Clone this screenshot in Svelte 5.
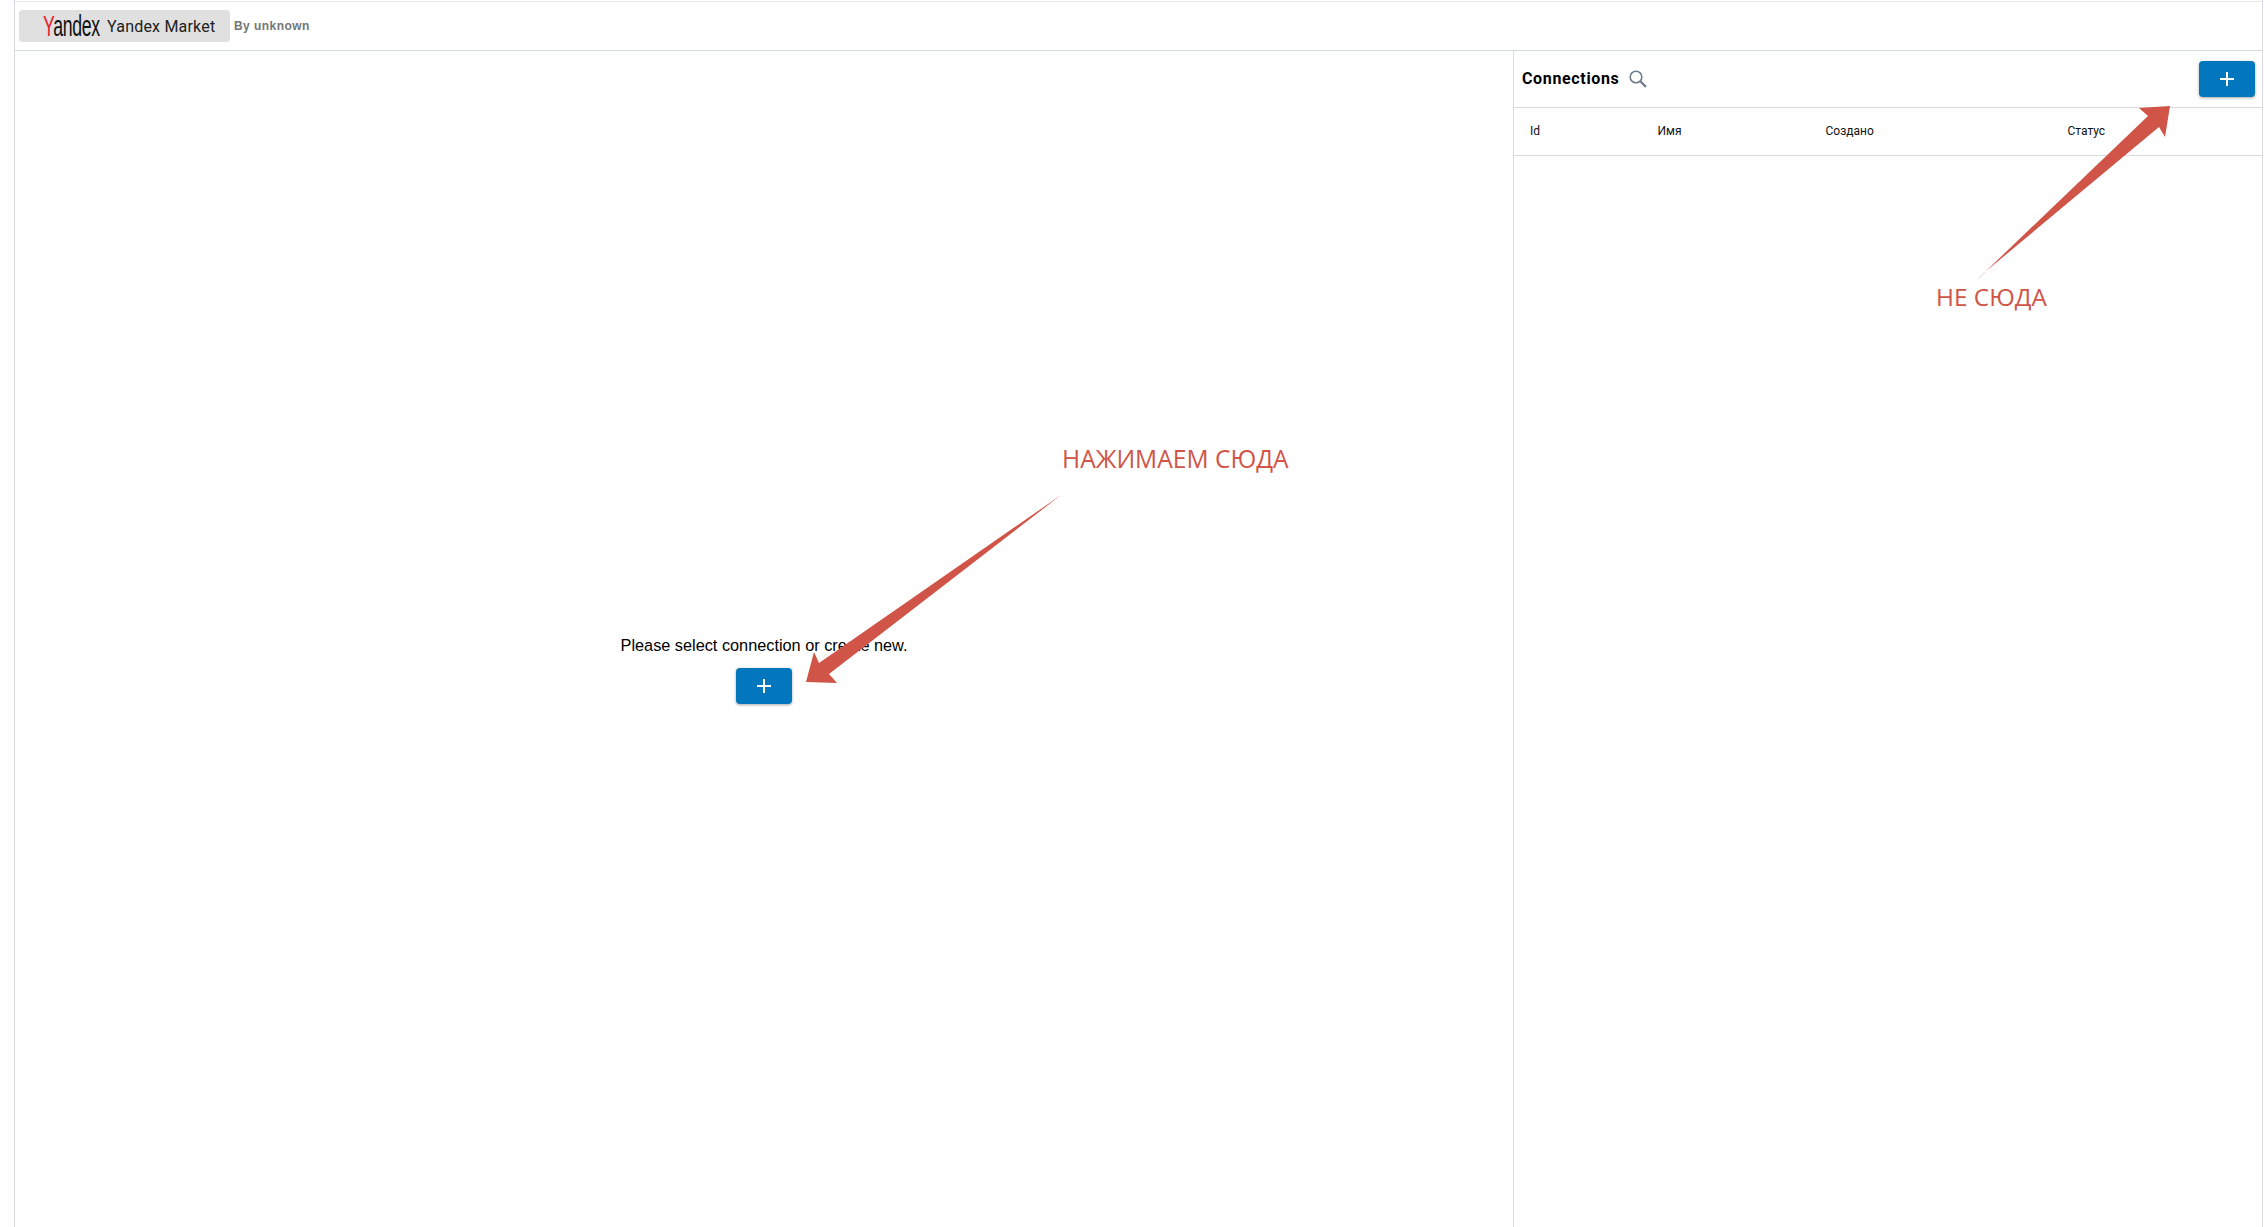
<script>
	const columns = ['Id', 'Имя', 'Создано', 'Статус'];
</script>

<div class="page">
	<header class="topbar">
		<div class="chip">
			<span class="logo"><span class="logo-text"><span class="y">Y</span>andex</span></span>
			<span class="chip-name">Yandex Market</span>
		</div>
		<span class="author">By unknown</span>
	</header>

	<div class="body">
		<main class="main">
			<p class="hint">Please select connection or create new.</p>
			<button class="add" aria-label="Add">
				<svg width="16" height="16" viewBox="0 0 16 16"><path d="M8 1v14M1 8h14" stroke="#fff" stroke-width="2" fill="none" /></svg>
			</button>
		</main>

		<aside class="side">
			<div class="side-head">
				<h2>Connections</h2>
				<svg class="search" width="20" height="20" viewBox="0 0 20 20" fill="none" stroke="#6f7c8c">
					<circle cx="8" cy="8" r="5.8" stroke-width="1.6" />
					<path d="M12.3 12.3l5.6 5.6" stroke-width="2.2" />
				</svg>
				<button class="add right" aria-label="Add">
					<svg width="16" height="16" viewBox="0 0 16 16"><path d="M8 1v14M1 8h14" stroke="#fff" stroke-width="2" fill="none" /></svg>
				</button>
			</div>
			<div class="table-head">
				{#each columns as col}
					<span>{col}</span>
				{/each}
			</div>
		</aside>
	</div>

	<!-- annotations drawn on top of the screenshot -->
	<svg class="arrows" width="2265" height="1227" viewBox="0 0 2265 1227">
		<polygon fill="#d05447" points="1061,495 829,674 837,683 806,682 814,652 819,663" />
		<polygon fill="#d05447" points="1985,272 2159,127 2165,137 2170,106 2139,108 2148,116" />
		<path d="M1985 272L1979 278" stroke="#d05447" stroke-width="1" opacity="0.25" />
	</svg>
	<span class="note note-yes">НАЖИМАЕМ СЮДА</span>
	<span class="note note-no">НЕ СЮДА</span>
</div>

<style>
	:global(body) {
		background: #fff;
		overflow: hidden;
	}

	.page {
		position: relative;
		height: 1227px;
		box-sizing: border-box;
		margin-left: 14px;
		margin-right: 2px;
		padding-top: 1px;
		display: flex;
		flex-direction: column;
		border-left: 1px solid #d9d9df;
		border-right: 1px solid #d9d9df;
		font-family: Roboto, sans-serif;
		color: #000;
	}

	.topbar {
		height: 50px;
		flex: none;
		box-sizing: border-box;
		display: flex;
		align-items: center;
		padding-left: 4px;
		border-top: 1px solid #e8e8ec;
		border-bottom: 1px solid #d5dae2;
	}

	.chip {
		width: 211px;
		height: 32px;
		box-sizing: border-box;
		display: flex;
		align-items: center;
		background: #e0e0e0;
		border-radius: 4px;
		padding-left: 24px;
	}

	.logo {
		width: 64px;
		flex: none;
	}

	.logo-text {
		display: inline-block;
		font-family: "Liberation Sans", sans-serif;
		font-size: 29px;
		line-height: 32px;
		color: #111;
		transform: scaleX(0.61);
		transform-origin: left center;
		letter-spacing: -0.5px;
	}

	.y {
		color: #e8232a;
	}

	.chip-name {
		font-size: 16px;
		letter-spacing: 0.2px;
		color: #212121;
		white-space: nowrap;
	}

	.author {
		margin-left: 4px;
		font-family: "Liberation Sans", sans-serif;
		font-size: 12px;
		font-weight: 700;
		letter-spacing: 0.45px;
		color: #757575;
	}

	.body {
		flex: 1;
		display: flex;
		min-height: 0;
	}

	.main {
		width: 1499px;
		flex: none;
		box-sizing: border-box;
		border-right: 1px solid #d9d9df;
		display: flex;
		flex-direction: column;
		align-items: center;
		padding-top: 585px;
	}

	.hint {
		margin: 0 0 14px;
		font-family: "Liberation Sans", sans-serif;
		font-size: 16.3px;
		line-height: 18px;
	}

	.add {
		width: 56px;
		height: 36px;
		padding: 0;
		border: 0;
		border-radius: 4px;
		background: #0277bd;
		box-shadow: 0 1px 3px rgba(0, 0, 0, 0.35);
		display: flex;
		align-items: center;
		justify-content: center;
	}

	.side {
		flex: 1;
		min-width: 0;
	}

	.side-head {
		height: 57px;
		box-sizing: border-box;
		display: flex;
		align-items: center;
		padding: 0 7px 1px 8px;
		border-bottom: 1px solid #d9d9df;
	}

	.side-head h2 {
		margin: 0;
		font-size: 16px;
		font-weight: 700;
		letter-spacing: 0.65px;
	}

	.search {
		margin-left: 9px;
	}

	.right {
		margin-left: auto;
	}

	.table-head {
		height: 48px;
		box-sizing: border-box;
		display: grid;
		grid-template-columns: 127.5px 168px 242px 1fr;
		align-items: center;
		padding: 0 0 2px 16px;
		border-bottom: 1px solid #d9d9df;
		font-size: 12px;
		color: #111;
	}

	.arrows {
		position: absolute;
		left: -15px;
		top: 0;
		pointer-events: none;
	}

	.note {
		position: absolute;
		font-family: "Open Sans", sans-serif;
		font-size: 24.6px;
		line-height: 32px;
		color: #d05447;
		white-space: nowrap;
	}

	.note-yes {
		left: 1047px;
		top: 443px;
	}

	.note-no {
		left: 1921px;
		top: 281px;
		font-size: 24.4px;
	}
</style>
